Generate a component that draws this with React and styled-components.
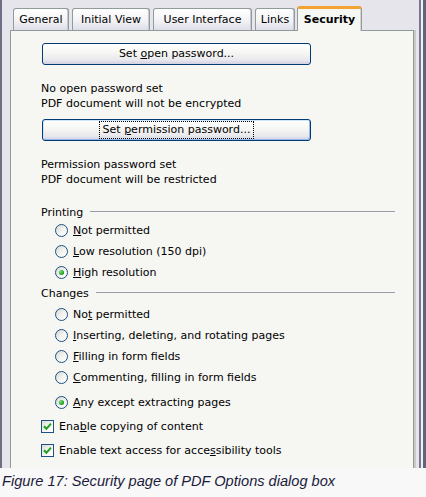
import React from "react";
import styled, { createGlobalStyle } from "styled-components";

const GlobalStyle = createGlobalStyle`
  html, body { margin: 0; padding: 0; background: #f8f8f8; }
  body { font-family: "DejaVu Sans", "Liberation Sans", sans-serif; }
`;

const Dialog = styled.div`
  width: 426px;
  height: 468px;
  box-sizing: border-box;
  background: #e5e5eb;
  display: flex;
  flex-direction: column;
  overflow: hidden;
  box-shadow: inset 2px 0 0 #6e6e84, inset -3px 0 0 #62627a,
    inset -5px 0 0 #efeff3, inset -7px 0 0 #77778e;
`;

const TabRow = styled.div`
  display: flex;
  align-items: flex-end;
  height: 30px;
  padding-left: 13px;
  gap: 3px;
  box-sizing: border-box;
`;

const Tab = styled.div`
  width: ${(p) => p.$w}px;
  height: 22px;
  box-sizing: border-box;
  border: 1px solid #919b9c;
  border-bottom: none;
  border-radius: 3px 3px 0 0;
  background: linear-gradient(#ffffff, #f3f3f6 55%, #dedee8);
  box-shadow: inset -1px 0 0 #c8c8d2;
  display: flex;
  align-items: center;
  justify-content: center;
  font-size: 11px;
  color: #000;
  white-space: nowrap;
`;

const ActiveTab = styled(Tab)`
  position: relative;
  z-index: 1;
  height: 25px;
  margin-bottom: -1px;
  margin-left: -1px;
  border-top: 3px solid #f3a333;
  background: #f6f6f3;
  box-shadow: inset -1px 0 0 #d6d6ce;
  font-weight: bold;
  padding-bottom: 1px;
`;

const Panel = styled.div`
  margin-left: 10px;
  width: 404px;
  flex: 1;
  box-sizing: border-box;
  background: #f6f6f3;
  border: 1px solid #919b9c;
  border-bottom: none;
  box-shadow: 2px 0 0 #cacac2;
  padding: 12px 18px 0 30px;
  display: flex;
  flex-direction: column;
`;

const Button = styled.button`
  width: 269px;
  height: 22px;
  margin: ${(p) => p.$mt || 0}px 0 0 1px;
  box-sizing: border-box;
  border: 1px solid #003c74;
  border-radius: 3px;
  background: linear-gradient(#ffffff, #f6f6f3 45%, #e8e8ee 80%, #d4d0e2);
  box-shadow: ${(p) =>
    p.$focused ? "inset 1px 1px 0 #cee7ff, inset -1px -1px 0 #98b8ea" : "none"};
  font-family: "DejaVu Sans", sans-serif;
  font-size: 11px;
  color: #000;
  padding: 0;
  display: flex;
  align-items: center;
  justify-content: center;
`;

const ButtonLabel = styled.span`
  white-space: pre;
  line-height: 13px;
  padding: 1px 3px 2px;
  border: 1px ${(p) => (p.$focused ? "dotted #000" : "solid transparent")};
`;

const Info = styled.div`
  margin-top: ${(p) => p.$mt}px;
  font-size: 11px;
  line-height: 15px;
  color: #000;
`;

const Section = styled.div`
  display: flex;
  align-items: center;
  gap: 7px;
  height: 15px;
  margin-top: ${(p) => p.$mt}px;
  font-size: 11px;
  color: #000;
`;

const Rule = styled.div`
  flex: 1;
  height: 1px;
  background: #9c9ca6;
  margin-bottom: 3px;
`;

const Group = styled.div`
  display: flex;
  flex-direction: column;
  margin-top: ${(p) => p.$mt || 0}px;
`;

const OptionRow = styled.div`
  display: flex;
  align-items: center;
  gap: 5px;
  height: ${(p) => p.$h || 21}px;
  padding-left: ${(p) => (p.$check ? 0 : 14)}px;
  font-size: 11px;
  color: #000;
  white-space: nowrap;
`;

const Radio = styled.span`
  width: 13px;
  height: 13px;
  box-sizing: border-box;
  border-radius: 50%;
  border: 1px solid #1c5180;
  background: linear-gradient(135deg, #d6d6d0, #f4f4f2 55%, #ffffff);
  display: flex;
  align-items: center;
  justify-content: center;
  flex: none;
`;

const Dot = styled.span`
  width: 5px;
  height: 5px;
  border-radius: 50%;
  background: radial-gradient(circle at 35% 35%, #7ee07e, #21a121 60%, #168016);
`;

const Box = styled.span`
  width: 13px;
  height: 13px;
  box-sizing: border-box;
  border: 1px solid #1c5180;
  background: linear-gradient(135deg, #dcdcd7, #fbfbf9 70%, #ffffff);
  display: flex;
  align-items: center;
  justify-content: center;
  flex: none;
`;

const U = styled.span`
  text-decoration: underline;
`;

const Caption = styled.div`
  font-family: "Liberation Sans", Arial, sans-serif;
  font-style: italic;
  font-size: 14.6px;
  line-height: 17px;
  color: #1b1b3b;
  padding: 5px 0 0 2px;
  white-space: nowrap;
`;

const RadioOpt = ({ checked, children }) => (
  <OptionRow>
    <Radio>{checked && <Dot />}</Radio>
    <span>{children}</span>
  </OptionRow>
);

const CheckOpt = ({ children }) => (
  <OptionRow $check $h={24}>
    <Box>
      <svg width="9" height="9" viewBox="0 0 9 9">
        <path d="M1 4.2 L3.4 6.8 L8 1.6" fill="none" stroke="#21a121" strokeWidth="2" />
      </svg>
    </Box>
    <span>{children}</span>
  </OptionRow>
);

export default function App() {
  return (
    <>
      <GlobalStyle />
      <Dialog>
        <TabRow>
          <Tab $w={56}>General</Tab>
          <Tab $w={78}>Initial View</Tab>
          <Tab $w={99}>User Interface</Tab>
          <Tab $w={40}>Links</Tab>
          <ActiveTab $w={65}>Security</ActiveTab>
        </TabRow>
        <Panel>
          <Button>
            <ButtonLabel>
              Set <U>o</U>pen password...
            </ButtonLabel>
          </Button>
          <Info $mt={16}>
            No open password set
            <br />
            PDF document will not be encrypted
          </Info>
          <Button $mt={8} $focused>
            <ButtonLabel $focused>
              Set <U>p</U>ermission password...
            </ButtonLabel>
          </Button>
          <Info $mt={16}>
            Permission password set
            <br />
            PDF document will be restricted
          </Info>
          <Section $mt={18}>
            <span>Printing</span>
            <Rule />
          </Section>
          <Group>
            <RadioOpt>
              <U>N</U>ot permitted
            </RadioOpt>
            <RadioOpt>
              <U>L</U>ow resolution (150 dpi)
            </RadioOpt>
            <RadioOpt checked>
              <U>H</U>igh resolution
            </RadioOpt>
          </Group>
          <Section $mt={3}>
            <span>Changes</span>
            <Rule />
          </Section>
          <Group $mt={3}>
            <RadioOpt>
              No<U>t</U> permitted
            </RadioOpt>
            <RadioOpt>
              <U>I</U>nserting, deleting, and rotating pages
            </RadioOpt>
            <RadioOpt>
              <U>F</U>illing in form fields
            </RadioOpt>
            <RadioOpt>
              <U>C</U>ommenting, filling in form fields
            </RadioOpt>
          </Group>
          <Group $mt={4}>
            <RadioOpt checked>
              <U>A</U>ny except extracting pages
            </RadioOpt>
          </Group>
          <Group $mt={1}>
            <CheckOpt>
              Ena<U>b</U>le copying of content
            </CheckOpt>
            <CheckOpt>
              Enable text access for acce<U>s</U>sibility tools
            </CheckOpt>
          </Group>
        </Panel>
      </Dialog>
      <Caption>Figure 17: Security page of PDF Options dialog box</Caption>
    </>
  );
}
